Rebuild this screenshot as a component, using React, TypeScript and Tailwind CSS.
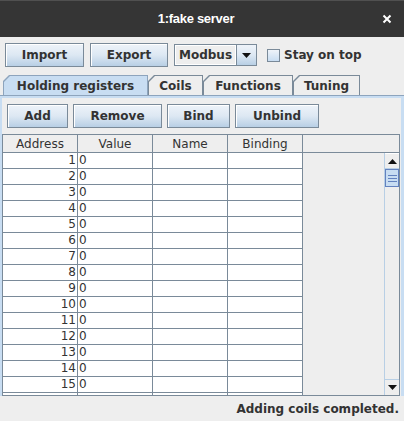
import React from "react";

const btn =
  "h-[24px] flex items-center justify-center border border-[#7a8a99] bg-gradient-to-b from-[#eef3f9] via-[#dde8f3] to-[#b8cfe5] text-[12px] font-bold text-[#333333] shadow-[inset_1px_1px_0_#ffffff]";

const tabShape = { clipPath: "polygon(6px 0, 100% 0, 100% 100%, 0 100%, 0 6px)" };

function Tab({ label, width, selected }: { label: string; width: number; selected?: boolean }) {
  return (
    <div
      className={`h-[20px] pt-[1px] pl-[1px] pr-[1px] ${selected ? "bg-[#8da4bd]" : "bg-[#7a8a99]"}`}
      style={{ width, ...tabShape }}
    >
      <div
        className={`h-full flex items-center justify-center text-[12px] font-bold text-[#333333] ${
          selected ? "bg-[#c8ddf2]" : "bg-[#eeeeee]"
        }`}
        style={tabShape}
      >
        {label}
      </div>
    </div>
  );
}

function Triangle({ up }: { up?: boolean }) {
  return (
    <svg width="9" height="5" viewBox="0 0 9 5">
      <path d={up ? "M0 5 L4.5 0 L9 5 Z" : "M0 0 L9 0 L4.5 5 Z"} fill="#111" />
    </svg>
  );
}

export default function App() {
  const rows = Array.from({ length: 15 }, (_, i) => i + 1);
  const cell = "w-[75px] shrink-0 bg-white border-r border-b border-[#7a8a99]";

  return (
    <div className="w-[404px] h-[421px] bg-[#eeeeee] flex flex-col overflow-hidden font-['DejaVu_Sans',sans-serif] text-[#333333]">
      {/* title bar */}
      <div className="h-[37px] shrink-0 bg-[#353535] border-t border-[#505050] flex items-center">
        <div className="flex-1" />
        <div className="text-[13px] font-bold text-white tracking-[-0.3px] font-['Liberation_Sans',sans-serif]">
          1:fake server
        </div>
        <div className="flex-1 flex justify-end pr-[12px]">
          <svg width="10" height="10" viewBox="0 0 10 10">
            <path d="M1.5 1.5 L8.5 8.5 M8.5 1.5 L1.5 8.5" stroke="#ffffff" strokeWidth="2" />
          </svg>
        </div>
      </div>

      {/* toolbar */}
      <div className="flex items-center pt-[6px] pl-[5px] h-[30px] shrink-0">
        <button className={`${btn} w-[79px]`}>Import</button>
        <button className={`${btn} w-[78px] ml-[6px]`}>Export</button>
        <div className="ml-[6px] w-[83px] h-[22px] flex border border-[#7a8a99]">
          <div className="flex-1 flex items-center pl-[3px] text-[12px] font-bold bg-[#eeeeee] border border-white">
            Modbus
          </div>
          <div className="w-[20px] flex items-center justify-center border-l border-[#7a8a99] bg-gradient-to-b from-[#eef3f9] via-[#dde8f3] to-[#b8cfe5]">
            <Triangle />
          </div>
        </div>
        <div className="ml-[10px] w-[13px] h-[13px] border border-[#7a8a99] bg-gradient-to-b from-[#eef3f9] to-[#c8ddf2]" />
        <span className="ml-[4px] text-[12px] font-bold">Stay on top</span>
      </div>

      {/* tabs */}
      <div className="flex pl-[3px] mt-[8px] shrink-0">
        <Tab label="Holding registers" width={145} selected />
        <Tab label="Coils" width={55} />
        <Tab label="Functions" width={90} />
        <Tab label="Tuning" width={67} />
      </div>

      {/* tab content */}
      <div className="flex-1 min-h-0 border-t border-[#8da4bd] bg-[#c8ddf2] pt-[2px] pl-[2px] pr-[3px] flex flex-col">
        <div className="flex-1 min-h-0 bg-[#eeeeee] flex flex-col">
          <div className="flex items-center pt-[6px] pl-[5px] gap-[5px] shrink-0">
            <button className={`${btn} w-[61px]`}>Add</button>
            <button className={`${btn} w-[89px]`}>Remove</button>
            <button className={`${btn} w-[63px]`}>Bind</button>
            <button className={`${btn} w-[84px]`}>Unbind</button>
          </div>

          {/* scroll pane */}
          <div className="mt-[6px] h-[263px] mr-[1px] border border-[#7a8a99] flex flex-col overflow-hidden">
            <div className="flex h-[18px] shrink-0 border-b border-[#7a8a99]">
              {["Address", "Value", "Name", "Binding"].map((h) => (
                <div
                  key={h}
                  className="w-[75px] shrink-0 border-r border-[#7a8a99] flex items-center justify-center text-[12px] bg-[#eeeeee]"
                >
                  {h}
                </div>
              ))}
              <div className="flex-1" />
            </div>
            <div className="flex-1 min-h-0 flex">
              <div className="flex-1 overflow-hidden">
                {rows.map((n) => (
                  <div key={n} className="flex h-[16px]">
                    <div className={`${cell} text-right pr-[1px] text-[12px] leading-[15px]`}>{n}</div>
                    <div className={`${cell} pl-[1px] text-[12px] leading-[15px]`}>0</div>
                    <div className={cell} />
                    <div className={cell} />
                  </div>
                ))}
                {/* next row, only its top edge shows */}
                <div className="flex h-[16px]">
                  <div className={cell} />
                  <div className={cell} />
                  <div className={cell} />
                  <div className={cell} />
                </div>
              </div>
              {/* scrollbar */}
              <div className="w-[15px] shrink-0 border-l border-[#b8cfe5] flex flex-col bg-[#eeeeee]">
                <div className="h-[16px] flex items-center justify-center bg-[#eeeeee] border-b border-[#b8cfe5] border-t border-t-white">
                  <Triangle up />
                </div>
                <div className="h-[18px] bg-[#c8ddf2] border border-[#6382bf] flex flex-col items-center justify-center gap-[2px]">
                  <div className="w-[9px] h-[1px] bg-[#6382bf]" />
                  <div className="w-[9px] h-[1px] bg-[#6382bf]" />
                  <div className="w-[9px] h-[1px] bg-[#6382bf]" />
                </div>
                <div className="flex-1" />
                <div className="h-[16px] flex items-center justify-center border-t border-[#b8cfe5]">
                  <Triangle />
                </div>
              </div>
            </div>
          </div>
        </div>
      </div>

      {/* status bar */}
      <div className="h-[25px] shrink-0 flex items-center justify-end pr-[5px] text-[12px] font-bold">
        Adding coils completed.
      </div>
    </div>
  );
}
